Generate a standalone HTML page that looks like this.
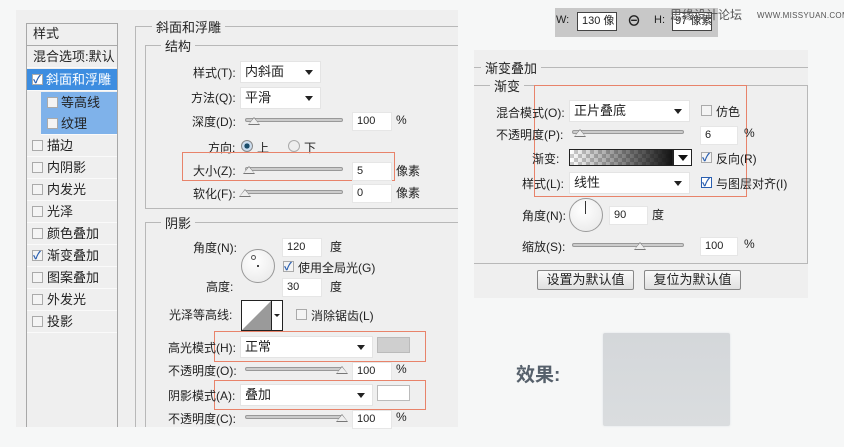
<!DOCTYPE html>
<html><head><meta charset="utf-8">
<style>
*{margin:0;padding:0;box-sizing:border-box}
body{width:844px;height:447px;background:#f6f7f7;position:relative;overflow:hidden;font-family:"Liberation Sans","Noto Sans CJK SC",sans-serif;font-size:12px;color:#222}
.a{position:absolute;white-space:nowrap}
.panel{position:absolute;background:#efefef}
.box{position:absolute;border:1px solid #b8b8b8;border-right:none;border-bottom:none}
.t{position:absolute;background:#efefef;padding:0 4px;font-size:13px}
.sel{position:absolute;background:#fff;border:1px solid #e4e4e4;padding-left:4px;line-height:20px;font-size:13px}
.sel:after{content:"";position:absolute;right:7px;top:8px;border-left:4px solid transparent;border-right:4px solid transparent;border-top:5px solid #222}
.inp{position:absolute;background:#fff;border:1px solid #e6e6e6;padding-left:4px;font-size:11px;line-height:17px;white-space:nowrap;overflow:hidden}
.sl{position:absolute;height:4px;border:1px solid #999;background:#ccc;border-radius:2px}
.th{position:absolute;width:0;height:0;border-left:6px solid transparent;border-right:6px solid transparent;border-bottom:8px solid #777}
.th:after{content:"";position:absolute;left:-5px;top:1px;border-left:5px solid transparent;border-right:5px solid transparent;border-bottom:6px solid #eee}
.cb{position:absolute;width:11px;height:11px;border:1px solid #aaa;background:#f4f4f4}
.ck:after{content:"✓";position:absolute;left:0px;top:-4px;font-size:11px;color:#2a5fb0;font-weight:bold}
.red{position:absolute;border:1px solid #e8836a}
.row{position:absolute;left:27px;width:90px;height:22px;border-bottom:1px solid #fafafa;line-height:22px;font-size:13px}
.dial{position:absolute;border:1px solid #999;border-radius:50%;background:radial-gradient(circle at 40% 35%,#fff,#e6e6e6)}
.btn{position:absolute;border:1px solid #888;border-radius:2px;background:linear-gradient(#fafafa,#e0e0e0);text-align:center;line-height:17px;font-size:13px}
</style></head><body>

<div class="panel" style="left:16px;top:10px;width:442px;height:417px"></div>
<div class="a" style="left:26px;top:23px;width:92px;height:404px;border:1px solid #a8a8a8;border-bottom:none;background:#efefef"></div>
<div class="row" style="top:23px;height:23px;border-bottom:1px solid #aaa;padding-left:6px">样式</div>
<div class="row" style="top:46px;padding-left:6px">混合选项:默认</div>
<div class="row" style="top:69px;background:#3d8de0;color:#fff;padding-left:19px">斜面和浮雕</div>
<div class="cb ck" style="left:32px;top:74px;background:#fff"></div>
<div class="row" style="top:92px;left:41px;width:76px;background:#7fb2ea;padding-left:20px">等高线</div>
<div class="cb" style="left:47px;top:97px"></div>
<div class="row" style="top:113px;left:41px;width:76px;background:#7fb2ea;padding-left:20px">纹理</div>
<div class="cb" style="left:47px;top:118px"></div>
<div class="row" style="top:135px;padding-left:20px">描边</div><div class="cb" style="left:32px;top:140px"></div>
<div class="row" style="top:157px;padding-left:20px">内阴影</div><div class="cb" style="left:32px;top:162px"></div>
<div class="row" style="top:179px;padding-left:20px">内发光</div><div class="cb" style="left:32px;top:184px"></div>
<div class="row" style="top:201px;padding-left:20px">光泽</div><div class="cb" style="left:32px;top:206px"></div>
<div class="row" style="top:223px;padding-left:20px">颜色叠加</div><div class="cb" style="left:32px;top:228px"></div>
<div class="row" style="top:245px;padding-left:20px">渐变叠加</div><div class="cb ck" style="left:32px;top:250px"></div>
<div class="row" style="top:267px;padding-left:20px">图案叠加</div><div class="cb" style="left:32px;top:272px"></div>
<div class="row" style="top:289px;padding-left:20px">外发光</div><div class="cb" style="left:32px;top:294px"></div>
<div class="row" style="top:311px;padding-left:20px">投影</div><div class="cb" style="left:32px;top:316px"></div>

<div class="box" style="left:135px;top:26px;width:323px;height:401px"></div>
<div class="t" style="left:152px;top:17px">斜面和浮雕</div>
<div class="box" style="left:145px;top:45px;width:313px;height:164px;border-bottom:1px solid #b8b8b8"></div>
<div class="t" style="left:161px;top:36px">结构</div>

<div class="a" style="left:193px;top:64px">样式(T):</div><div class="sel" style="left:240px;top:61px;width:81px">内斜面</div>
<div class="a" style="left:191px;top:89px">方法(Q):</div><div class="sel" style="left:240px;top:87px;width:81px">平滑</div>
<div class="a" style="left:192px;top:113px">深度(D):</div><div class="sl" style="left:245px;top:118px;width:98px"></div><div class="th" style="left:248px;top:117px"></div>
<div class="inp" style="left:352px;top:112px;width:40px">100</div><div class="a" style="left:396px;top:113px">%</div>
<div class="a" style="left:208px;top:139px">方向:</div>
<div class="a" style="left:241px;top:140px;width:12px;height:12px;border-radius:50%;border:1px solid #888;background:radial-gradient(#1a4c6a 35%,#cde 40%)"></div>
<div class="a" style="left:257px;top:139px">上</div>
<div class="a" style="left:288px;top:140px;width:12px;height:12px;border-radius:50%;border:1px solid #aaa;background:#eee"></div>
<div class="a" style="left:304px;top:139px">下</div>
<div class="red" style="left:182px;top:152px;width:213px;height:29px"></div>
<div class="a" style="left:193px;top:162px">大小(Z):</div><div class="sl" style="left:245px;top:167px;width:98px"></div><div class="th" style="left:243px;top:166px"></div>
<div class="inp" style="left:352px;top:162px;width:40px">5</div><div class="a" style="left:396px;top:162px">像素</div>
<div class="a" style="left:193px;top:185px">软化(F):</div><div class="sl" style="left:245px;top:190px;width:98px"></div><div class="th" style="left:239px;top:189px"></div>
<div class="inp" style="left:352px;top:184px;width:40px">0</div><div class="a" style="left:396px;top:184px">像素</div>

<div class="box" style="left:145px;top:222px;width:313px;height:205px"></div>
<div class="t" style="left:161px;top:213px">阴影</div>
<div class="a" style="left:193px;top:239px">角度(N):</div>
<div class="dial" style="left:241px;top:249px;width:34px;height:34px"></div>
<div class="a" style="left:251px;top:255px;width:5px;height:5px;border:1px solid #555;border-radius:50%"></div>
<div class="a" style="left:257px;top:265px;width:2px;height:2px;background:#444"></div>
<div class="inp" style="left:282px;top:238px;width:40px">120</div><div class="a" style="left:330px;top:238px">度</div>
<div class="cb ck" style="left:283px;top:261px"></div><div class="a" style="left:298px;top:259px">使用全局光(G)</div>
<div class="a" style="left:206px;top:278px">高度:</div>
<div class="inp" style="left:282px;top:278px;width:40px">30</div><div class="a" style="left:330px;top:278px">度</div>
<div class="a" style="left:169px;top:306px">光泽等高线:</div>
<svg class="a" style="left:241px;top:300px" width="42" height="31"><rect x="0.5" y="0.5" width="30" height="30" fill="#fff" stroke="#222"/><polygon points="1,30 30,1 30,30" fill="#9a9a9a"/><rect x="30.5" y="0.5" width="11" height="30" fill="#fff" stroke="#222"/><polygon points="33,14 39,14 36,17" fill="#222"/></svg>
<div class="cb" style="left:296px;top:309px"></div><div class="a" style="left:311px;top:307px">消除锯齿(L)</div>
<div class="red" style="left:214px;top:331px;width:212px;height:31px"></div>
<div class="a" style="left:168px;top:339px">高光模式(H):</div><div class="sel" style="left:240px;top:336px;width:133px">正常</div>
<div class="a" style="left:377px;top:337px;width:33px;height:16px;background:#cfcfcf;border:1px solid #bbb"></div>
<div class="a" style="left:168px;top:362px">不透明度(O):</div><div class="sl" style="left:245px;top:367px;width:98px"></div><div class="th" style="left:336px;top:366px"></div>
<div class="inp" style="left:352px;top:362px;width:40px">100</div><div class="a" style="left:396px;top:362px">%</div>
<div class="red" style="left:214px;top:380px;width:212px;height:30px"></div>
<div class="a" style="left:168px;top:387px">阴影模式(A):</div><div class="sel" style="left:240px;top:384px;width:133px">叠加</div>
<div class="a" style="left:377px;top:385px;width:33px;height:16px;background:#fff;border:1px solid #bbb"></div>
<div class="a" style="left:168px;top:410px">不透明度(C):</div><div class="sl" style="left:245px;top:415px;width:98px"></div><div class="th" style="left:336px;top:414px"></div>
<div class="inp" style="left:352px;top:410px;width:40px">100</div><div class="a" style="left:396px;top:410px">%</div>

<div class="a" style="left:555px;top:8px;width:163px;height:29px;background:#c8c8c8"></div>
<div class="a" style="left:556px;top:14px;font-size:11px">W:</div>
<div class="inp" style="left:577px;top:12px;width:40px;height:19px;border-color:#444;font-size:11px">130 像</div>
<div class="a" style="left:627px;top:11px;font-weight:bold;font-size:14px">⊖</div>
<div class="a" style="left:654px;top:14px;font-size:11px">H:</div>
<div class="inp" style="left:672px;top:12px;width:40px;height:19px;border-color:#444;font-size:11px;padding-left:2px">97 像素</div>
<div class="a" style="left:670px;top:6px;font-size:12px;color:#555">思缘设计论坛</div>
<div class="a" style="left:757px;top:11px;font-size:8px;color:#555;letter-spacing:.3px">WWW.MISSYUAN.COM</div>

<div class="panel" style="left:474px;top:50px;width:334px;height:248px"></div>
<div class="a" style="left:474px;top:67px;width:334px;border-top:1px solid #b8b8b8"></div>
<div class="t" style="left:481px;top:58px">渐变叠加</div>
<div class="a" style="left:474px;top:85px;width:334px;height:179px;border-top:1px solid #b8b8b8;border-bottom:1px solid #b8b8b8;border-right:1px solid #b8b8b8"></div>
<div class="t" style="left:490px;top:76px">渐变</div>
<div class="red" style="left:534px;top:85px;width:213px;height:112px"></div>
<div class="a" style="left:496px;top:104px">混合模式(O):</div><div class="sel" style="left:569px;top:100px;width:121px">正片叠底</div>
<div class="cb" style="left:701px;top:105px"></div><div class="a" style="left:716px;top:103px">仿色</div>
<div class="a" style="left:496px;top:126px">不透明度(P):</div><div class="sl" style="left:572px;top:130px;width:112px"></div><div class="th" style="left:574px;top:129px"></div>
<div class="inp" style="left:700px;top:126px;width:38px">6</div><div class="a" style="left:744px;top:126px">%</div>
<div class="a" style="left:532px;top:150px">渐变:</div>
<div class="a" style="left:569px;top:149px;width:104px;height:17px;border:1px solid #222;background:linear-gradient(90deg,rgba(40,40,40,0) ,rgba(20,20,20,1)),repeating-conic-gradient(#ccc 0 25%,#fff 0 50%) 0 0/8px 8px"></div>
<div class="a" style="left:673px;top:149px;width:19px;height:17px;border:1px solid #222;background:#fff"></div>
<div class="a" style="left:678px;top:155px;border-left:5px solid transparent;border-right:5px solid transparent;border-top:6px solid #111"></div>
<div class="cb ck" style="left:701px;top:152px"></div><div class="a" style="left:716px;top:150px">反向(R)</div>
<div class="a" style="left:522px;top:175px">样式(L):</div><div class="sel" style="left:569px;top:172px;width:121px">线性</div>
<div class="cb ck" style="left:701px;top:177px;background:#fff;border-color:#2a5fb0"></div><div class="a" style="left:716px;top:175px">与图层对齐(I)</div>
<div class="a" style="left:522px;top:207px">角度(N):</div>
<div class="dial" style="left:569px;top:198px;width:34px;height:34px"></div>
<div class="a" style="left:585px;top:201px;width:1px;height:13px;background:#333"></div>
<div class="inp" style="left:609px;top:206px;width:39px">90</div><div class="a" style="left:652px;top:206px">度</div>
<div class="a" style="left:522px;top:238px">缩放(S):</div><div class="sl" style="left:572px;top:243px;width:112px"></div><div class="th" style="left:634px;top:242px"></div>
<div class="inp" style="left:700px;top:237px;width:38px">100</div><div class="a" style="left:744px;top:237px">%</div>
<div class="btn" style="left:537px;top:270px;width:97px;height:20px">设置为默认值</div>
<div class="btn" style="left:644px;top:270px;width:97px;height:20px">复位为默认值</div>

<div class="a" style="left:516px;top:360px;font-size:19px;font-weight:bold;color:#56606b">效果:</div>
<div class="a" style="left:603px;top:333px;width:127px;height:93px;background:linear-gradient(#d4d7da,#dadddf);border-radius:2px;box-shadow:0 0 2px #e0e3e6"></div>
</body></html>
